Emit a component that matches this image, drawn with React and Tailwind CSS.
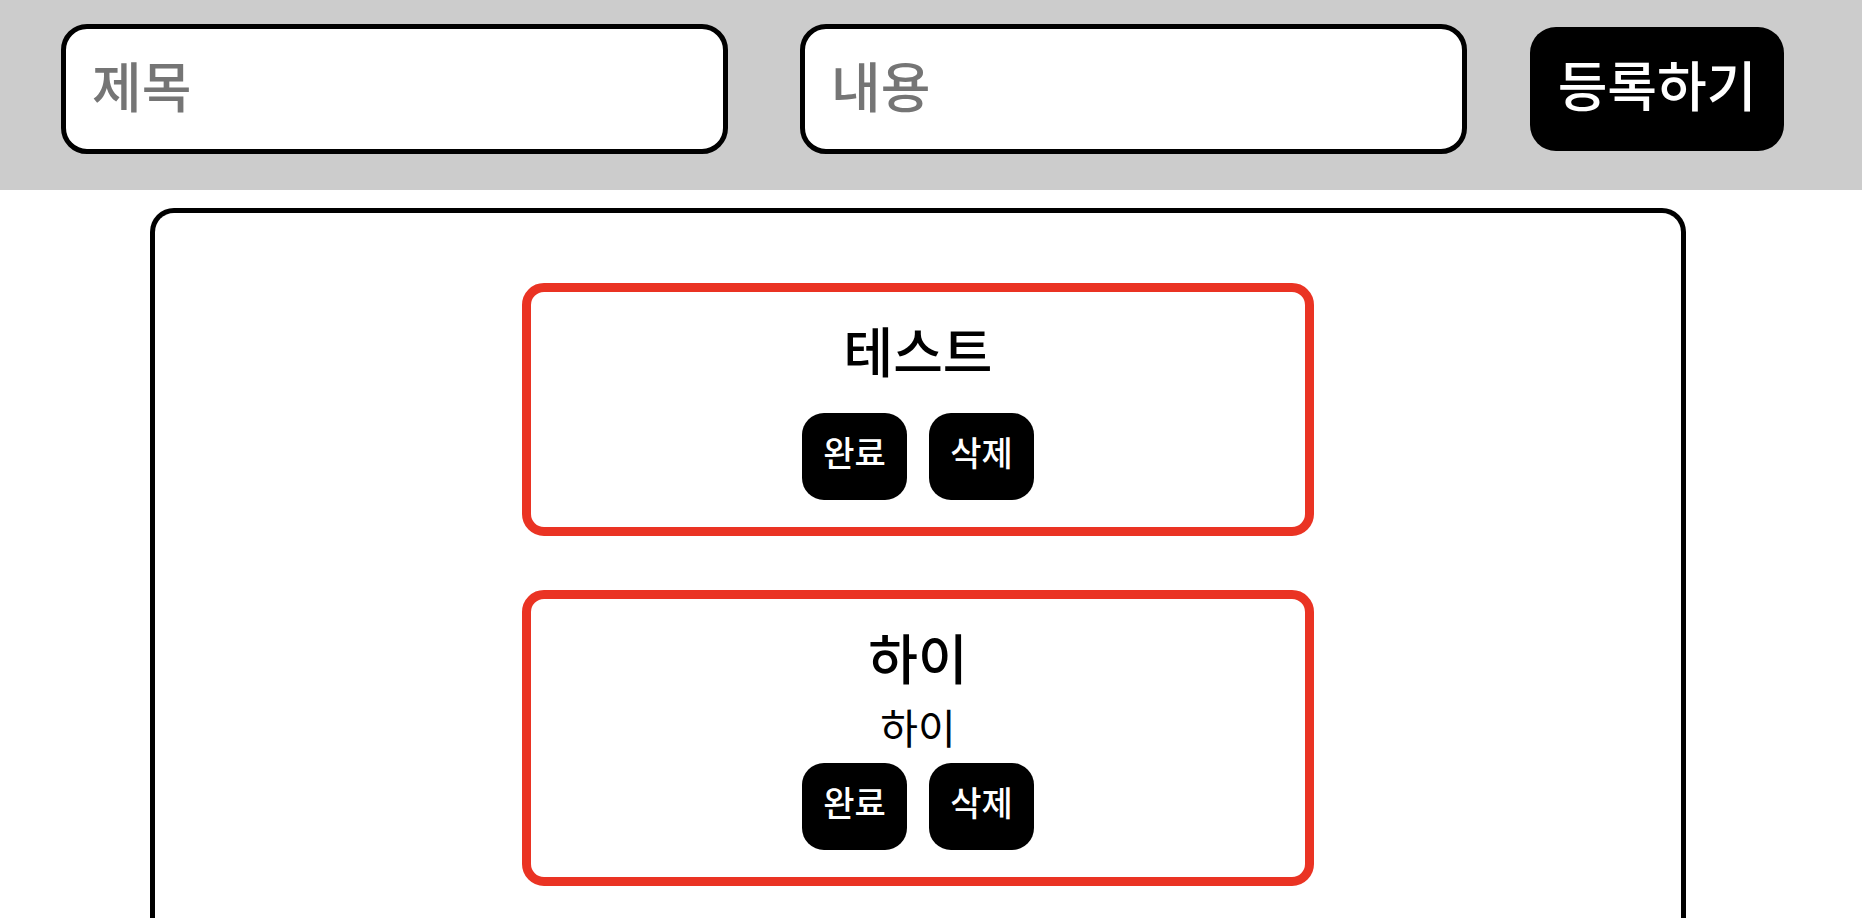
import { useState } from "react";

const initialTodos = [
  { id: 1, title: "테스트", content: "" },
  { id: 2, title: "하이", content: "하이" },
];

const fieldClass =
  "h-[130px] w-full rounded-[26px] border-5 border-black bg-white px-[26px] pb-[10px] text-[54px] font-medium text-black placeholder:text-[#757575] outline-none";

const cardButtonClass =
  "h-[87px] w-[105px] rounded-[22px] bg-black pb-[10px] text-[34px] leading-[50px] font-medium text-white";

function TodoCard({ todo, onRemove }) {
  return (
    <li className="flex w-full max-w-[792px] flex-col items-center rounded-[22px] border-9 border-[#ea3323] pt-5 pb-[27px]">
      <h2 className="text-[54px] leading-[75px] font-medium">{todo.title}</h2>
      <div className="pt-[11px] pb-[15px]">
        {todo.content && (
          <p className="text-[41px] leading-[43px]">{todo.content}</p>
        )}
      </div>
      <div className="flex gap-[22px]">
        <button type="button" className={cardButtonClass}>
          완료
        </button>
        <button
          type="button"
          className={cardButtonClass}
          onClick={() => onRemove(todo.id)}
        >
          삭제
        </button>
      </div>
    </li>
  );
}

export default function App() {
  const [todos, setTodos] = useState(initialTodos);
  const [title, setTitle] = useState("");
  const [content, setContent] = useState("");

  const addTodo = (event) => {
    event.preventDefault();
    if (!title) return;
    setTodos([...todos, { id: Date.now(), title, content }]);
    setTitle("");
    setContent("");
  };

  const removeTodo = (id) => setTodos(todos.filter((todo) => todo.id !== id));

  return (
    <div className="flex min-h-screen flex-col bg-white font-['Noto_Sans_CJK_KR','Noto_Sans',sans-serif] text-black">
      <form
        onSubmit={addTodo}
        className="flex items-center bg-[#cccccc] pt-6 pr-[78px] pb-9 pl-[61px]"
      >
        <div className="flex flex-1 gap-[72px]">
          <input
            aria-label="제목"
            placeholder="제목"
            className={fieldClass}
            value={title}
            onChange={(event) => setTitle(event.target.value)}
          />
          <input
            aria-label="내용"
            placeholder="내용"
            className={fieldClass}
            value={content}
            onChange={(event) => setContent(event.target.value)}
          />
        </div>
        <button
          type="submit"
          className="ml-[63px] h-[124px] w-[254px] shrink-0 rounded-[26px] bg-black pb-[10px] text-[54px] leading-[80px] font-medium text-white"
        >
          등록하기
        </button>
      </form>
      <main className="mt-[18px] mr-[176px] ml-[150px] flex-1 rounded-t-[24px] border-5 border-b-0 border-black pt-[70px]">
        <ul className="flex flex-col items-center gap-[54px]">
          {todos.map((todo) => (
            <TodoCard key={todo.id} todo={todo} onRemove={removeTodo} />
          ))}
        </ul>
      </main>
    </div>
  );
}
